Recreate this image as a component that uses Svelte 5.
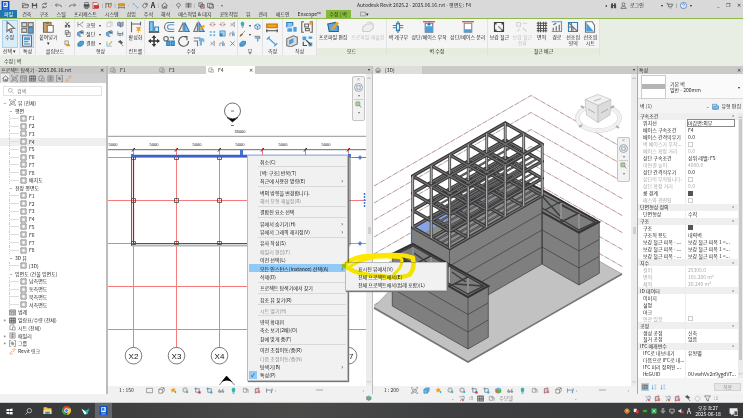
<script>
	const B = "#4a9fdc", K = "#4a4a4a", O = "#f2a21c", G = "#bdbdbd", T = "#2f7fb8", R = "#e03030";

	// every icon is a list of [path, fill, stroke] on a 16x16 grid
	const icons = {
		revit: [["M1 0h14v16H1z", "#0b4fc4"], ["M4 2h8v9H4z", "#fff"], ["M4 13h8v2H4z", "#7fb2ff"], ["M6 9V4h3v2H7l3 3", "none", "#0b4fc4"]],
		open: [["M1 13V3h5l1 2h6v3M1 13l3-6h12l-3 6z", "none", K]],
		save: [["M2 2h10l2 2v10H2z", K], ["M5 2h6v4H5zM4 9h8v5H4z", "#ddd"]],
		sync: [["M3 7a5 5 0 0 1 9-2M13 9a5 5 0 0 1-9 2M12 1v4H8M4 15v-4h4", "none", K]],
		undo: [["M5 3L1 7l4 4M1 7h10q4 0 4 5", "none", K]],
		redo: [["M11 3l4 4-4 4M15 7H5q-4 0-4 5", "none", K]],
		print: [["M4 6V1h8v5M3 6h11v6H3zM5 10h6v5H5z", "#ddd", K], ["M2 6h12v4H2z", K]],
		pdf: [["M2 1h9l3 3v11H2z", "#eee", "#a33"], ["M4 7h12v7H4z", R]],
		join: [["M2 2v12M2 4h12M14 2v8M8 4v8", "none", K], ["M9 9h5v5H9z", O]],
		ruler: [["M1 4h14v5H1z", O, "#b9740a"], ["M1 13h14M1 11v4M15 11v4", "none", K]],
		dim: [["M3 4l10 9M1 6l4-4M11 15l4-4", "none", B]],
		tag: [["M3 9l5-6h6v6l-6 5z", "none", K], ["M11 5h1v1h-1z", K, K]],
		home: [["M1 8l7-6 7 6M3 7v7h10V7M7 14v-4h3v4", "none", K]],
		section: [["M8 2l5 5-5 5-5-5zM8 12v3", "none", K]],
		thin: [["M1 3h14M1 8h14", "none", B], ["M1 5h14M1 11h14M8 2v12", "none", K]],
		closew: [["M2 2h8v8H2zM6 6h8v8H6z", "#ddd", K], ["M8 8l5 5M13 8l-5 5", "none", R]],
		windows: [["M1 3h11v9H1zM5 6h10v8H5z", "#eee", K]],
		find: [["M2 14V7l2-5h2l1 5h2l1-5h2l2 5v7h-5v-5H7v5z", K]],
		user: [["M8 2a3 3 0 0 1 3 4q0 3-3 3T5 6a3 3 0 0 1 3-4M2 15q0-5 6-5t6 5z", "none", "#456"]],
		cart: [["M1 3h3l2 8h7l2-6H5M7 14h1M12 14h1", "none", "#345"]],
		help: [["M8 1a7 7 0 1 1 0 14A7 7 0 1 1 8 1z", "#e8f0ff", "#2b66b0"], ["M6 6q0-2 2-2t2 2q0 1-2 3M8 11v1", "none", "#2b66b0"]],
		arrow: [["M4 1v13l3-3 2 5 2-1-2-5h5z", "#fff", "#777"]],
		modprops: [["M1 2h6v5H1zM9 2h6v5H9zM1 9h6v5H1z", "#d9d9d9", "#777"], ["M9 8h6v7H9z", B, "#777"]],
		props: [["M2 1h12v14H2z", "#eaf5fc", "#667"], ["M4 3h8v4H4z", B], ["M4 9h6M4 12h8", "none", T]],
		paste: [["M2 2h10v13H2z", "#c9a26b", "#8a6a3c"], ["M7 6h8v9H7z", "#fff", "#777"], ["M5 1h4v3H5z", "#777"]],
		cut: [["M3 2l8 9M12 2L4 11", "none", "#222"], ["M3 10h3v4H3zM10 10h3v4h-3z", "none", "#222"]],
		copy: [["M3 1h7v9H3zM6 5h8v10H6z", "#fff", "#555"]],
		match: [["M2 2h8v9H2z", "#eee", "#777"], ["M4 8l8 1 2 5H6z", O], ["M6 12h8", "none", B]],
		cope: [["M2 2v12M6 8l8-6M6 8l8 6M2 8h5M13 2v3", "none", "#777"]],
		cutgeo: [["M1 6l6-3 7 3v6l-7 3-6-3z", "#6aabd8", "#3b6f99"], ["M8 8h7v6H8z", "#f5f5f5"], ["M9 2h5v5H9z", "none", K]],
		joingeo: [["M2 8l5-5h8v6l-5 5H2z", B, "#2e6b99"]],
		wallj: [["M2 4h9v9H2zM5 2h9v9", "none", G]],
		split: [["M1 4l6-2v10l-6-2zM8 5l6-3v9l-6 3z", "#8ab9d8", "#667"]],
		beam: [["M2 3v10M2 8h11M13 4v9", "none", "#555"], ["M4 10h6v4H4z", B]],
		paint: [["M2 3v11h11", "none", B], ["M5 11l8-9 2 2-8 8z", O]],
		hammer: [["M3 4l5-3 5 5-3 2zM8 7l6 7", "#555", "#555"]],
		activate: [["M2 1v14M14 1v5M2 4h12", "none", "#666"], ["M8 8h7l-2 3 2 2H8l2-2zM11 13h1v3h-1z", O]],
		align: [["M2 1h5v13H2z", "#8bc3ea", T], ["M9 8h5v6H9z", "#dfeffa", T], ["M1 15h14", "none", K]],
		offset: [["M15 2H8a6 6 0 0 0 0 12h7", "none", "#777"], ["M15 5H9a3 3 0 0 0 0 6h6", "none", B]],
		mirror: [["M7 2v12H1z", "#e5e5e5", "#777"], ["M9 2v12h6z", "#84bde6", T]],
		mirrorp: [["M6 2v12H1z", "#e5e5e5", "#777"], ["M8 2v12h7z", "#84bde6", T], ["M9 10l5-5 2 2-5 5z", O]],
		move: [["M8 0l3 4H9v3h3V5l4 3-4 3V9H9v3h2l-3 4-3-4h2V9H4v2L0 8l4-3v2h3V4H5z", "#333"]],
		copym: [["M4 2a3 3 0 1 1 0 6 3 3 0 1 1 0-6z", "none", "#666"], ["M5 8h4v6H5zM11 8h4v6h-4z", B, T], ["M9 3h5v3", "none", "#666"]],
		rotate: [["M11 3a6.500 6.500 0 1 0 3 5M7 2h5v5", "none", "#555"]],
		trim: [["M1 4h8v4M1 8h5v7", "none", "#777"], ["M7 3l8 2v5l-3-2v6H9V8z", "#6fb4e4"]],
		splitm: [["M1 8h5M10 8h5", "none", "#777"], ["M4 4h8v7H4z", "none", "#e09090"]],
		array: [["M1 2h6v5H1zM9 2h6v5H9zM1 9h6v5H1zM9 9h6v5H9z", B, "#fff"]],
		scale: [["M2 2h12v12H2z", "#a4d0ee", T], ["M2 8h6v6H2z", T]],
		pin: [["M3 12l9-9M4 5l7 7M12 2v12", "none", "#777"]],
		trim1: [["M2 14V7h10v7M9 2v12", "none", "#777"], ["M7 9h3v4H7z", B]],
		del: [["M3 3l10 10M13 3L3 13", "none", "#e02020"]],
		bulb: [["M8 1a5 5 0 0 1 3 8v3H5V9a5 5 0 0 1 3-8z", "#35b3b3"], ["M6 14h4", "none", K]],
		brush: [["M14 2L7 9", "none", "#666"], ["M7 8l2 2-5 5H1l2-4z", "#8d5a2b"]],
		box: [["M2 5l6-3 6 3v7l-6 3-6-3z", "#dceefa", T], ["M2 5l6 3 6-3M8 8v7", "none", "#667"]],
		hide: [["M1 3h12v6", "none", K], ["M2 5h12v3h-4v7H7V8H2z", B]],
		part: [["M1 2h8v7H1z", "#8bc3ea", T], ["M1 9h8v6H1zM9 7h6v8H9z", B, "#fff"]],
		group: [["M4 1H1v14h3M12 1h3v14h-3", "none", "#666"], ["M5 4h5v4H5zM6 10h5v3H6z", "none", "#666"], ["M11 1h4v4h-4z", O]],
		assembly: [["M1 5l9-4 5 2v9l-9 4-5-2z", "#dcdcdc", "#777"], ["M4 7l6-3v6l-6 3z", B]],
		similar: [["M2 2h5v5H2zM10 2h5v3h-5zM10 10h5v5h-5z", B], ["M7 7l6 6M3 9v5h5", "none", K]],
		profile: [["M1 4l10-2v3l4 2v7H3z", "#5aa9e0", "#2c5f85"], ["M6 9l7-8 3 2-7 8-3 1z", O]],
		reset: [["M1 8l5-4h9v6l-5 4H1zM7 2q5-2 7 2", "#eee", "#cfcfcf"]],
		opening: [["M1 6h14M1 9h14", "none", "#777"], ["M6 3h4v10H6z", "#e8f4fc", T], ["M8 0v5M8 11v5", "none", T]],
		attach: [["M0 1h16", "none", "#d33"], ["M3 3h10v12H3z", "#fff", "#777"], ["M3 7h10v8H3z", B], ["M8 7V3l-2 2M8 3l2 2", "none", T]],
		detach: [["M0 1h16", "none", "#d33"], ["M3 3h10v12H3z", "#fff", "#888"], ["M3 11h10v4H3z", B]],
		rebar: [["M2 2h12v12H2z", "none", "#444"], ["M3 3h1v1H3zM12 3h1v1h-1zM3 12h1v1H3zM12 12h1v1h-1z", K, K], ["M7 7l5 5", "none", "#888"]],
		propag: [["M1 2h5v5H1zM9 3h6M9 9l5 5M5 10l-3 4", "none", "#d3d3d3"]],
		mesh: [["M3 1v14M6 1v14M10 1v14M13 1v14M1 3h14M1 6h14M1 10h14M1 13h14", "none", "#555"]],
		route: [["M1 1h13v13H1", "none", B], ["M3 9v4M7 7v6M11 5v8M3 5l4-2", "none", "#666"]],
		fabric: [["M2 2h12v12H2z", "#f8f8f8", T], ["M2 2l12 12M2 8h6v6M6 2v12", "none", "#777"]],
		fabric2: [["M2 1h9l3 5v9H2z", "#fff", "#777"], ["M3 2l10 12H3z", B]],
		search: [["M6 1a5 5 0 1 1 0 10A5 5 0 1 1 6 1zM10 10l5 5", "none", "#888"]],
		view: [["M1 1h3M12 1h3M1 15h3M12 15h3M1 1v3M15 1v3M1 12v3M15 12v3M4 5h8v7H4zM4 12l8-7", "none", "#777"]],
		plan: [["M2 2h12v12H2z", "#fff", "#777"], ["M0 4h2M0 12h2M14 4h2M14 12h2M4 0v2M12 0v2M4 14v2M12 14v2M4 4h8v8H4z", "none", "#999"]],
		legend: [["M1 2h14v12H1z", "#ccc", "#777"], ["M1 5h14M4 8h3M4 11h3M9 8h4M9 11h4", "none", "#777"]],
		sched: [["M1 2h14v12H1z", "#ddd", "#555"], ["M1 4h14M1 8h14M1 11h14M6 2v12M11 2v12", "none", "#555"]],
		sheet: [["M2 13V4l4-2h5v4M2 13h6M8 7h6v7H8z", "none", "#777"]],
		family: [["M2 2h12v12H2zM5 5h6v6H5zM8 2v12", "none", "#777"]],
		grp: [["M5 1H1v14h4M11 1h4v14h-4M5 5h4v4H5zM7 7h4v4H7z", "none", "#777"]],
		link: [["M7 5l3-3q3-1 4 2l-5 5M9 11l-3 3q-3 1-4-2l5-5", "none", "#e8864a"]],
		detail: [["M1 3h14v10H1z", "none", "#777"]],
		style: [["M2 6l4-4h8v7l-4 5H2z", "#fff", "#666"], ["M2 6h8v8M10 6l4-4", "none", "#666"]],
		styleb: [["M2 6l4-4h8v7l-4 5H2z", "#74bdf0", "#3483c0"], ["M2 6h8v8M10 6l4-4", "none", "#3483c0"]],
		sun: [["M7 1l2 3 4 0-2 3 2 4-5-1-4 3V9L1 6l4-1z", O], ["M11 9h3v5h-3z", "#3ab0c0"]],
		shadow: [["M7 2a5 5 0 1 1 0 10A5 5 0 1 1 7 2z", "#e5e5e5", "#777"], ["M10 9h4v5h-4z", "#3ab0c0"]],
		crop: [["M4 1v11h11M1 4h11v10", "none", "#456a90"], ["M10 10h5v5h-5z", R]],
		crop2: [["M4 1v11h11M1 4h11v10", "none", "#456a90"], ["M10 10h4v5h-4z", "#3ab0c0"]],
		glasses: [["M1 10l3-5M8 10l4-6M2 9h4v3H2zM9 9h4v3H9z", "none", "#666"]],
		reveal: [["M3 3h8v9H3zM7 6h7v7", "none", "#888"]],
		temp: [["M3 4l8-2v9l-8 3z", "#dcb", "#846"], ["M9 8h5v6H9z", "#d77"]],
		constr: [["M1 3v10M14 3v6M1 7h13", "none", "#667"], ["M11 9h3v5h-3z", "#3ab0c0"]],
		level: [["M3 2l6 6-4 6M8 3h6v6", "none", "#6a8098"], ["M9 9h5v5H9z", "#e47a6a"]],
		filter: [["M1 2h14L10 8v6l-4-2V8z", "none", "#567"]],
		gear: [["M8 2l4 2 2 4-2 4-4 2-4-2-2-4 2-4z", "none", "#bbb"]],
		wheel: [["M8 1a7 7 0 1 1 0 14A7 7 0 1 1 8 1zM5 5h6v6H5z", "#f6f6f6", "#8a97a8"]],
		zoomr: [["M2 2h9v9H2z", "#a9cf9c", "#7a9a70"], ["M9 9l6 6", "none", "#777"]],
		world: [["M1 4l6-3 7 3v8l-7 3-6-3z", "#5bb7d8"], ["M7 8l7-3v7l-7 3z", "#6cb04a"], ["M1 4l6 3v8l-6-3z", "#d8705a"]],
		win: [["M1 3l6-1v5H1zM8 2l7-1v6H8zM1 9h6v5l-6-1zM8 9h7v6l-7-1z", "#fff"]],
		searchw: [["M10 1a5 5 0 1 1 0 10A5 5 0 1 1 10 1zM6 10l-5 5", "none", "#eee"]],
		explorer: [["M1 2h6l1 2h7v10H1z", "#f6c544"], ["M1 7h14v7H1z", "#fbdc82"], ["M4 10h8v4H4z", "#3a8fd8"]],
		chrome: [["M8 0a8 8 0 0 1 7 4H8L4 7 1 4a8 8 0 0 1 7-4z", "#e8453c"], ["M15 4a8 8 0 0 1-7 12l3-6V4z", "#fcc419"], ["M1 4l5 8 2 4A8 8 0 0 1 1 4z", "#34a853"], ["M8 4.500a3.500 3.500 0 1 1 0 7 3.500 3.500 0 1 1 0-7z", "#4285f4", "#fff"]],
		bird: [["M1 3l6 4 8-5-3 10-5 2z", "#21b8a6"], ["M1 3l6 4 3 5-4 1z", "#fff"]],
		hex: [["M8 1l6 4v6l-6 4-6-4V5z", "#c9731a", "#f3a13a"], ["M5 6h6M8 6v5", "none", "#fff"]],
		shield: [["M2 2h8v9H2z", "#eee"], ["M8 6h7v8H8z", "#e03a3a"]],
		chip: [["M2 4h12v8H2z", "#4ba23c", "#1c4a14"]],
		green: [["M1 1h14v14H1z", "#2cb04c"], ["M4 4l8 8M12 4l-8 8", "none", "#fff"]],
		mic: [["M6 1h4v8H6zM3 7q0 5 5 5t5-5M8 12v3", "none", "#ddd"]],
		net: [["M2 3h12v8H2zM5 14h6", "none", "#eee"]],
		vol: [["M1 6h3l5-4v12l-5-4H1z", "#eee"], ["M9 8h6v6H9z", "#e03a3a"]],
		note: [["M1 2h14v10H8l-4 3v-3H1z", "#eee"], ["M9 7h7v8H9z", "#555", "#ddd"]],
		edit: [["M1 3h10v11H1z", "#e4f0fa", T], ["M4 7h11v7H4z", "#8fc3e8", T]],
		sort: [["M4 2v12M2 11l2 3 2-3M9 3h5M9 8h4M9 13h5", "none", B]],
	};

	const tabs = ["건축", "구조", "스틸", "프리캐스트", "시스템", "삽입", "주석", "해석", "매스작업 & 대지", "공동작업", "뷰", "관리", "애드인", "Enscape™"];

	// [depth, toggle, icon, label]
	const floors = ["F1", "F2", "F3", "F4", "F5", "F6", "F7", "F8"];
	const leaf = (label) => [2, "", "plan", label];
	const tree = [
		[0, "−", "view", "뷰 (전체)"],
		[1, "−", "", "평면"],
		...floors.map(leaf),
		leaf("배치도"),
		[1, "−", "", "천장 평면도"],
		...floors.map(leaf),
		[1, "−", "", "3D 뷰"],
		leaf("{3D}"),
		[1, "−", "", "입면도 (건물 입면도)"],
		...["남측면도", "동측면도", "북측면도", "서측면도"].map(leaf),
		[0, "", "legend", "범례"],
		[0, "+", "sched", "일람표/수량 (전체)"],
		[0, "", "sheet", "시트 (전체)"],
		[0, "+", "family", "패밀리"],
		[0, "+", "grp", "그룹"],
		[0, "", "link", "Revit 링크"],
	];

	// [name, value, disabled], a lone name is a group heading
	const props = [
		["구속조건"],
		["위치선", "마감면:외부"], ["베이스 구속조건", "F4"], ["베이스 간격띄우기", "0.0"],
		["벽 베이스가 부착...", false, true], ["베이스 확장 거리", "0.0", true],
		["상단 구속조건", "상위 레벨: F5"], ["미연결 높이", "4000.0", true],
		["상단 간격띄우기", "0.0"], ["상단이 부착됩니다.", false, true],
		["상단 확장 거리", "0.0", true], ["룸 경계", true], ["매스와 관련됨", false, true],
		["단면형상 정의"],
		["단면형상", "수직"],
		["구조"],
		["구조", true], ["구조적 용도", "내력벽"],
		["보강 철근 피복 - ...", "보강 철근 피복 1 <..."],
		["보강 철근 피복 - ...", "보강 철근 피복 1 <..."],
		["보강 철근 피복 - ...", "보강 철근 피복 1 <..."],
		["치수"],
		["길이", "25300.0", true], ["면적", "101.200 m²", true], ["체적", "20.240 m³", true],
		["ID 데이터"],
		["이미지", ""], ["설명", ""], ["마크", ""], ["연관 있음", false, true],
		["공정"],
		["생성 공정", "신축"], ["철거 공정", "없음"],
		["IFC 매개변수"],
		["IFC로 내보내기", "유형별"], ["다음으로 IFC로 내...", ""],
		["IFC 미리 정의된 ...", ""], ["IfcGUID", "0UvwhVv2n9ygdVT..."],
	];

	// null is a separator
	const menu = [
		{ text: "취소(C)" }, null,
		{ text: "[벽: 구조] 반복(T)" }, { text: "최근에 사용한 명령(E)", more: true }, null,
		{ text: "벽의 방향을 변경합니다." }, { text: "해석 모형 재설정(R)", off: true }, null,
		{ text: "결합된 요소 선택" }, null,
		{ text: "뷰에서 숨기기(H)", more: true }, { text: "뷰에서 그래픽 재지정(V)", more: true }, null,
		{ text: "유사 작성(S)" }, { text: "패밀리 편집(F)", off: true }, { text: "이전 선택(L)" },
		{ text: "모든 인스턴스(Instance) 선택(A)", more: true, open: true }, { text: "삭제(D)" }, null,
		{ text: "프로젝트 탐색기에서 찾기" }, null,
		{ text: "참조 뷰 찾기(R)" }, null,
		{ text: "시트 열기(H)", off: true }, null,
		{ text: "영역 확대(I)" }, { text: "축소 보기(2배)(O)" }, { text: "창에 맞게 줌(F)" }, null,
		{ text: "이전 초점이동/줌(R)" }, { text: "다음 초점이동/줌(N)", off: true },
		{ text: "탐색기(B)", more: true }, { text: "특성(P)", checked: true },
	];
	const submenu = ["표시된 뷰에서(V)", "전체 프로젝트에서(E)", "전체 프로젝트에서(범례 포함)(L)"];

	const planBar = ["detail", "style", "sun", "shadow", "crop", "crop2", "glasses", "bulb", "reveal", "temp", "constr"];
	const modelBar = ["view", "styleb", "sun", "shadow", "shadow", "crop", "crop2", "world", "glasses", "bulb", "reveal", "temp", "style", "constr"];

	const gx = [133, 176, 219, 262, 305, 348];
	const gy = [157, 200, 243, 286, 329];

	// isometric frame: i runs along the long side, j along the short one, k is the storey from the top
	const pt = (i, j, k) => [412.7 + (i + j) * 18.5, 176 + (j - i) * 10.6 + k * 17.1];
	const seg = (a, b) => `M${a[0]} ${a[1]}L${b[0]} ${b[1]}`;
	const storeys = [3, 2, 1, 0].map((k) => {
		let beams = "", joists = "", cols = "";
		for (let j = 0; j <= 2; j++) beams += seg(pt(0, j, k), pt(5, j, k));
		for (let i = 0; i <= 5; i++) beams += seg(pt(i, 0, k), pt(i, 2, k));
		if (k > 0) for (const j of [0.5, 1.25, 1.5, 1.75]) joists += seg(pt(j < 1 ? 2 : 0, j, k), pt(5, j, k));
		if (k < 3)
			for (let j = 0; j <= 2; j++)
				for (let i = 0; i <= 5; i++)
					if (j == 2 || i == 0 || j == 0 || i == 5) cols += seg(pt(i, j, k), pt(i, j, k + 1));
		return { k, beams, joists, cols };
	});

	let keyword = $state("");
	let selected = $state(5);
</script>

{#snippet icon(name, size = 7)}
	<svg class="ico" width={size} height={size} viewBox="0 0 16 16" stroke-width="1.5" aria-hidden="true">
		{#each icons[name] as [d, fill, stroke]}
			<path {d} {fill} stroke={stroke ?? "none"} />
		{/each}
	</svg>
{/snippet}

{#snippet big(name, label, off = false)}
	<button class="big" disabled={off}>
		{@render icon(name, 12)}
		<span>{label}</span>
	</button>
{/snippet}

{#snippet small(name, label = "")}
	<button class="small" aria-label={label || name}>{@render icon(name, 7)}{label}</button>
{/snippet}

{#snippet navbar()}
	<div class="navbar">
		<i>×</i>
		<button aria-label="휠">{@render icon("wheel", 9)}</button>
		<i>▾</i>
		<hr />
		<button aria-label="줌">{@render icon("zoomr", 7)}</button>
		<i>▾</i>
	</div>
{/snippet}

{#snippet viewbar(scale, list)}
	<div class="viewbar">
		<span class="scale">{scale}</span>
		{#each list as name}
			<button aria-label={name}>{@render icon(name, 7)}</button>
		{/each}
		<div class="hscroll"><span>‹</span><b></b><span>›</span></div>
	</div>
{/snippet}

<div class="app">
	<header class="quick">
		<button aria-label="Revit">{@render icon("revit", 9)}</button>
		<div class="tools">
			{#each ["open", "save", "sync", "·", "undo", "·", "redo", "·", "print", "pdf", "|", "join", "|", "ruler", "·", "dim", "tag", "A", "|", "home", "·", "section", "thin", "|", "closew", "windows", "·", "▾"] as q}
				{#if icons[q]}
					<button aria-label={q}>{@render icon(q, 7)}</button>
				{:else if q == "A"}
					<button class="letter">A</button>
				{:else}
					<i>{q}</i>
				{/if}
			{/each}
		</div>
		<h1>Autodesk Revit 2025.2 - 2025.06.16.rvt - 평면도: F4</h1>
		<div class="account">
			<i>◂</i>
			{@render icon("find")}
			{@render icon("user")}
			<button>로그인</button>
			<i class="push">▾</i>
			{@render icon("cart")}
			<i>|</i>
			{@render icon("help")}
			<i>▾</i>
		</div>
		<div class="win">
			<button aria-label="최소화">_</button>
			<button aria-label="복원">❐</button>
			<button aria-label="닫기">✕</button>
		</div>
	</header>

	<nav class="tabs">
		<button class="file">파일</button>
		{#each tabs as t}
			<button>{t}</button>
		{/each}
		<button class="context">수정 | 벽</button>
		<button class="mini">{@render icon("detail", 6)} ▾</button>
	</nav>

	<div class="ribbon">
		<section class="panel w20">
			<div class="body"><button class="big on tall">{@render icon("arrow", 12)}<span>수정</span></button></div>
			<h2>선택 ▾</h2>
		</section>
		<section class="panel w16">
			<div class="body stack">
				<button aria-label="유형 특성">{@render icon("modprops", 13)}</button>
				<button class="on" aria-label="특성">{@render icon("props", 12)}</button>
			</div>
			<h2>특성</h2>
		</section>
		<section class="panel w39">
			<div class="body">
				<button class="big">{@render icon("paste", 12)}<span>붙여넣기</span><span>▾</span></button>
				<div class="col">{@render small("cut")}{@render small("copy")}{@render small("match")}</div>
			</div>
			<h2>클립보드</h2>
		</section>
		<section class="panel w52">
			<div class="body">
				<div class="col">{@render small("cope", "코핑")}{@render small("cutgeo", "절단")}{@render small("joingeo", "결합")}</div>
				<div class="col dots"><i>▾</i><i>▾</i><i>▾</i></div>
				<div class="col">{@render small("wallj")}{@render small("cutgeo")}{@render small("paint")}</div>
				<div class="col">{@render small("split")}{@render small("beam")}{@render small("hammer")}</div>
			</div>
			<h2>형상</h2>
		</section>
		<section class="panel w18">
			<div class="body">{@render big("activate", "활성화")}</div>
			<h2>컨트롤</h2>
		</section>
		<section class="panel w93">
			<div class="body">
				<div class="quad">
					{#each ["align", "offset", "mirror", "mirrorp", "move", "copym", "rotate", "trim"] as n}
						<button aria-label={n}>{@render icon(n, 12)}</button>
					{/each}
				</div>
				<div class="col">{@render small("splitm")}{@render small("array")}{@render small("pin")}</div>
				<div class="col">{@render small("splitm")}{@render small("scale")}{@render small("trim1")}</div>
				<div class="col">{@render small("pin")}{@render small("trim1")}{@render small("del")}</div>
			</div>
			<h2>수정</h2>
		</section>
		<section class="panel w25">
			<div class="body">
				<div class="col">{@render small("bulb")}{@render small("brush")}{@render small("joingeo")}</div>
				<div class="col dots"><i>▾</i><i>▾</i><i></i></div>
				<div class="col">{@render small("box")}{@render small("hide")}<i></i></div>
			</div>
			<h2>뷰</h2>
		</section>
		<section class="panel w20">
			<div class="body stack">
				<button aria-label="측정">{@render icon("ruler", 12)}</button>
				<button aria-label="치수">{@render icon("dim", 12)}</button>
			</div>
			<h2>측정</h2>
		</section>
		<section class="panel w34">
			<div class="body">
				<div class="quad two">
					{#each ["part", "group", "assembly", "similar"] as n}
						<button aria-label={n}>{@render icon(n, 12)}</button>
					{/each}
				</div>
			</div>
			<h2>작성</h2>
		</section>
		<section class="panel ctx w70">
			<div class="body">{@render big("profile", "프로파일 편집")}{@render big("reset", "프로파일 재설정", true)}</div>
			<h2>모드</h2>
		</section>
		<section class="panel ctx w101">
			<div class="body">{@render big("opening", "벽 개구부")}{@render big("attach", "상단/베이스 부착")}{@render big("detach", "상단/베이스 분리")}</div>
			<h2>벽 수정</h2>
		</section>
		<section class="panel ctx w110">
			<div class="body">
				{@render big("rebar", "보강 철근")}
				{@render big("propag", "보강 철근\n전파", true)}
				{@render big("mesh", "면적")}
				{@render big("route", "경로")}
				{@render big("fabric", "선조립\n영역")}
				{@render big("fabric2", "선조립\n시트")}
			</div>
			<h2>철근 배근</h2>
		</section>
	</div>
	<div class="options">수정 | 벽</div>

	<main class="work">
		<aside class="browser">
			<div class="caption">프로젝트 탐색기 - 2025.06.16.rvt <button aria-label="닫기">✕</button></div>
			<div class="tooling">
				{#each ["home", "view", "legend", "sched", "sheet", "family", "grp", "link"] as n, i}
					<button class:active={i == 0} aria-label={n}>{@render icon(n, 7)}</button>
				{/each}
			</div>
			<label class="search">{@render icon("search", 6)}<input type="text" placeholder="검색" aria-label="검색" bind:value={keyword} /></label>
			<ul class="tree">
				{#each tree as [depth, toggle, ic, label], i}
					<li class="d{depth}" class:sel={i == selected}>
						{#if depth == 2}
							<span class="dash"></span>
						{:else}
							<span class="toggle">{toggle}</span>
						{/if}
						<button onclick={() => (selected = i)}>
							{#if ic}{@render icon(ic, 7)}{/if}{label}
						</button>
					</li>
				{/each}
			</ul>
		</aside>

		<section class="doc">
			<div class="doctabs">
				<button>{@render icon("sheet", 6)}F1</button>
				<button>{@render icon("sheet", 6)}F3</button>
				<button class="active">{@render icon("sheet", 6)}F4<b>✕</b></button>
				<i>▾</i>
			</div>
			<div class="canvas">
				<svg class="drawing" viewBox="108 74 258 312" preserveAspectRatio="xMidYMid slice">
					<g fill="none" stroke="#333" stroke-width=".7">
						<circle cx="232.500" cy="111" r="8" />
						<path d="M231 111h3M231 125.500h3" />
						<path d="M227 117.500q6 3 11 0l-5.500 4.500z" fill="#000" />
					</g>
					<path d="M107 136.300h260" stroke="#aaa" stroke-width="1.200" />
					<path d="M107 149.700h260" stroke="#444" stroke-width=".8" />
					<g class="num">
						<text x="240" y="133">35000</text>
						{#each [113, 154, 197, 240, 283, 326] as x}
							<text {x} y="146">5000</text>
						{/each}
					</g>
					{#each gx as x}
						<path d="M{x + 0.5} 148v200" stroke="#f47c7c" />
						<path d="M{x - 1} 151.500l3-3.500" stroke="#222" />
					{/each}
					{#each gy as y}
						<path d="M107 {y + 0.5}h260" stroke="#f47c7c" />
					{/each}
					<path d="M131.500 156v90M350 156v89" stroke="#666" fill="none" />
					<path d="M133.500 157v88M348 157v88" stroke="#9a2222" stroke-width="1.200" />
					<path d="M132 245.500h218" stroke="#b5b5b5" stroke-width="2" />
					<path d="M133 243.500h216" stroke="#b02a2a" />
					{#each gx.slice(0, 3) as x}
						<path d="M{x - 1.500} 155.500h4v4h-4zM{x - 1.500} 198.500h4v4h-4zM{x - 1.500} 241.500h4v3h-4z" fill="none" stroke="#444" stroke-width=".8" />
					{/each}
					<path d="M132 155.800h218" stroke="#3f5fc4" stroke-width="2.200" />
					<path d="M131 154h3v3h-3zM348 154h3v3h-3zM240 150h3v5h-3z" fill="#4473d6" />
					<path d="M352 157.500h15" stroke="#8d6bc8" />
					<path d="M364.500 193v15" stroke="#4473d6" stroke-width="1.500" stroke-dasharray="2 1" />
					<path d="M358 157.500h4M360 155.500v4M358 243.500h4M360 241.500v4" stroke="#4473d6" stroke-width="1.500" />
					<g class="bubble">
						{#each [[133.5, "X2"], [176.5, "X3"], [219.5, "X4"], [348.5, "X7"]] as [x, name]}
							<circle cx={x} cy="355.700" r="8.300" />
							<text {x} y="358.500">{name}</text>
						{/each}
					</g>
					<path d="M226.500 376l-7 9M226.500 376l8 9" stroke="#333" stroke-width=".7" />
					<path d="M226.500 376l-5 6q5-3 11 0z" />
				</svg>
				<div class="vscroll"><span>︿</span><b></b><span>﹀</span></div>
				{@render navbar()}

				<svg class="marker under" viewBox="340 248 80 34"><use href="#scribble" /></svg>
				<div class="menu" role="menu">
					{#each menu as item}
						{#if item}
							<button role="menuitem" class:open={item.open} class:off={item.off}>
								<span class="check" class:checked={item.checked}>{item.checked ? "✓" : ""}</span>
								{item.text}
								{#if item.more}<em>›</em>{/if}
							</button>
						{:else}
							<hr />
						{/if}
					{/each}
				</div>
				<div class="menu sub" role="menu">
					{#each submenu as text}
						<button role="menuitem"><span class="check"></span>{text}</button>
					{/each}
				</div>
				<svg class="marker" viewBox="340 248 80 34">
					<g id="scribble" fill="none" stroke="#fff200" stroke-width="4.500" stroke-linecap="round">
						<path d="M344 266Q352 256 372 256Q404 253 413 258Q415 270 409 275Q400 279 380 276Q358 275 348 268" />
						<path d="M348 268Q358 260 376 257Q402 256 402 260Q402 268 394 274" stroke-width="3" />
					</g>
				</svg>
			</div>
			{@render viewbar("1 : 150", planBar)}
		</section>

		<section class="doc">
			<div class="doctabs">
				<button class="lit">{@render icon("home", 6)}{"{3D}"}</button>
				<i>▾</i>
			</div>
			<div class="canvas">
				<svg class="drawing" viewBox="373 74 258 312" preserveAspectRatio="xMidYMid slice">
					<!-- level lines round the model -->
					{#each [0, 1, 2, 3, 4, 5, 6, 7] as n}
						<path d="M374 {186 + n * 17}L531 {95.5 + n * 17}L623 {148 + n * 17}" fill="none" stroke="#a37a7a" stroke-width=".8" stroke-dasharray="5 .7 1 .7" />
					{/each}
					<path d="M374 307L468 362L622 274L599 261L542 225L400 280z" fill="#c2c2c2" stroke="#8a8a8a" stroke-width=".6" />
					<path d="M374 308L468 362L622 274" fill="none" stroke="#777" stroke-width="1.600" />

					<g class="solid">
						<!-- right wing -->
						<path d="M542 191L599.300 222V273.300L579 285L542 264z" />
						<path class="roof" d="M524 181L542 190L599 222L579 232.500L542 212z" />
						<path class="frame" d="M542 194L595 222.500L579 230L542 208M560 202L545 210M579 213L561 222M579 213V230M561 202V221M542 196L560 216M561 205L595 222" />
						<path d="M579 233V285M542 230L579 251L599 239.500M542 247L579 268L599 256.500M542 212L579 233L599 222" fill="none" />
						<!-- main block -->
						<path d="M411.500 227.500L449.500 248L542 195V264L488 295V286L449.500 264L411.500 244z" />
						<path d="M449.500 266L542 213M449.500 283L542 230M476 285L542 247M449.500 248V266M542 195V264" fill="none" />
						<!-- front wing -->
						<path d="M392.300 254L412.700 244L488.300 286V337.300L468 349L392.300 306z" />
						<path class="roof" d="M392.300 254L412.700 244L488.300 286L468 297z" />
						<path class="frame" d="M396 254L413 246L484 286L468 294zM413 247V265M431 257V275M449.500 267V286M468 278V295M413 265L431 256M431 275L450 266M450 286L468 277M414 253L428 263M452 272L466 282M455 284L483 286" />
						<path class="post" d="M413 247V262M431 257V272M449.500 267V283M468 278V293M561 203V219M579 214V229" />
						<path d="M468 297V349M392.300 271L468 314.500L488 303M392.300 288.500L468 332L488 320M392.300 254L468 297L488.300 286" fill="none" />
					</g>

					{#each storeys as s}
						{#if s.k == 3}
							<path d="M412.700 227.300L449.700 248.500L542.200 195.500L505.200 174.300z" fill="#8e8e8e" />
							<path d="M411.700 227L505 173.500L516 180L424 233z" fill="#86a3e6" />
							<path d="M411.500 244V227L505 173.500" fill="none" stroke="#3462d0" stroke-width="1.200" />
						{/if}
						<path d={s.joists} stroke="#484848" stroke-width="2.200" />
						<path d={s.joists} stroke="#858585" stroke-width=".6" />
						<path d={s.beams} stroke="#343434" stroke-width="3.400" stroke-linecap="round" />
						<path d={s.beams} stroke="#6f6f6f" stroke-width="1.400" />
						<path d={s.cols} stroke="#3a3a3a" stroke-width="2.800" />
						<path d={s.cols} stroke="#b8b8b8" stroke-width="1.200" />
					{/each}

					<!-- view cube -->
					<ellipse cx="598.500" cy="118" rx="21" ry="12.500" fill="none" stroke="#d4d4d4" stroke-width="4.500" />
					<ellipse cx="598.500" cy="118" rx="21" ry="12.500" fill="none" stroke="#f1f1f1" stroke-width="3.500" />
					<path d="M579 127l3-2M616 126l3 2M581 106l3 2M611 108l3-2" stroke="#aaa" stroke-width="2" />
					<g stroke="#b5b5b5" stroke-width=".6">
						<path d="M585 99.500L598 94.500L611 99.500L598 105.500z" fill="#f1f1f1" />
						<path d="M585 99.500L598 105.500V122.500L586.500 115z" fill="#e6e6e6" />
						<path d="M611 99.500L598 105.500V122.500L610 115z" fill="#dcdcdc" />
						<path d="M594 101l7-2.500M588 109l7 4M601 113l7-4" stroke="#888" />
					</g>
				</svg>
				<div class="vscroll"><span>︿</span><b></b><span>﹀</span></div>
				<div class="lower">{@render navbar()}</div>
			</div>
			{@render viewbar("1 : 200", modelBar)}
		</section>

		<aside class="props">
			<div class="caption">특성 <button aria-label="닫기">✕</button></div>
			<button class="type">
				<span class="preview"></span>
				<span class="name">기본 벽<br />일반 - 200mm</span>
				<i>▾</i>
			</button>
			<div class="filter">
				<select aria-label="선택"><option>벽 (1)</option></select>
				<i>⌄</i>
				<button>{@render icon("edit", 7)}유형 편집</button>
			</div>
			<div class="gridwrap">
				<table>
					<tbody>
						{#each props as [name, value, off], i}
							{#if value === undefined}
								<tr class="head"><th colspan="2">{name}<i>«</i></th></tr>
							{:else}
								<tr class:off>
									<td>{name}</td>
									<td>
										{#if typeof value == "boolean"}
											<input type="checkbox" checked={value} disabled={off} aria-label={name} />
										{:else if i == 1}
											<input type="text" {value} aria-label={name} />
										{:else}
											{value}
										{/if}
									</td>
								</tr>
							{/if}
						{/each}
					</tbody>
				</table>
				<div class="vscroll long"><span>︿</span><b></b><span>﹀</span></div>
			</div>
			<div class="apply">
				<button class="on" aria-label="그룹">{@render icon("sched", 6)}</button>
				<button aria-label="정렬">{@render icon("sort", 6)}</button>
				<button aria-label="역정렬">{@render icon("sort", 6)}</button>
				<button class="go" disabled>적용</button>
			</div>
		</aside>
	</main>

	<footer class="status">
		<div class="left">{@render icon("world", 6)}</div>
		<div class="mid">
			<i>⌄</i>{@render icon("level", 7)}<span>:0</span>{@render icon("sched", 7)}{@render icon("reveal", 7)}<span>주모델</span><i class="end">⌄</i>
		</div>
		<div class="right">
			{#each ["level", "temp", "level", "temp", "hammer", "gear", "filter"] as n}
				{@render icon(n, 7)}
			{/each}
			<span>:1</span>
		</div>
	</footer>

	<div class="taskbar">
		{#each ["win", "searchw", "explorer", "chrome", "bird", "revit"] as n, i}
			<button class:running={i == 2 || i == 3} class:current={i == 5} aria-label={n}>{@render icon(n, i < 2 ? 7 : 9)}</button>
		{/each}
		<div class="tray">
			{#each ["hex", "shield", "chip", "green", "mic", "net", "vol"] as n}
				{@render icon(n, 6)}
			{/each}
			<b>A</b>
		</div>
		<time>오후 8:27<br />2025-06-18</time>
		<button class="notes" aria-label="알림">{@render icon("note", 9)}</button>
	</div>
</div>

<style>
:global(body) {
	margin: 0;
}

.app {
	display: flex;
	flex-direction: column;
	min-height: 100vh;
	background: #f0f0f0;
	color: #2c2c2c;
	font-family: "Noto Sans CJK KR", "Noto Sans", sans-serif;
	font-size: 5px;
	line-height: 6px;
	overflow: hidden;
}

* {
	box-sizing: border-box;
}

button, input, select {
	font: inherit;
	color: inherit;
	border: 0;
	margin: 0;
	padding: 0;
	background: none;
	border-radius: 0;
}

button {
	display: flex;
	align-items: center;
	justify-content: center;
	white-space: nowrap;
}

i, em {
	font-style: normal;
	font-size: 4px;
}

h1, h2 {
	margin: 0;
	font-size: 5px;
	font-weight: normal;
}

.ico {
	display: block;
	flex: none;
}

/* title bar */
.quick {
	display: flex;
	align-items: center;
	height: 10px;
	background: #d9d9d9;
}
.quick > button {
	width: 10px;
}
.tools {
	display: flex;
	align-items: center;
	width: 201px;
	margin-left: 12px;
	justify-content: space-between;
	flex: none;
}
.tools i {
	color: #666;
}
.letter {
	font-weight: bold;
	font-size: 7px;
}
.quick h1 {
	flex: 1;
	text-align: center;
	white-space: nowrap;
}
.account {
	display: flex;
	align-items: center;
	gap: 3px;
	width: 90px;
}
.account .push {
	margin-left: 14px;
}
.win {
	display: flex;
	justify-content: space-between;
	width: 24px;
	margin: 0 2px 0 22px;
}

/* ribbon tabs */
.tabs {
	display: flex;
	height: 9px;
	background: #d9d9d9;
	border-bottom: 1px solid #8fb94b;
}
.tabs button {
	padding: 0 4px;
}
.tabs .file {
	background: #1f77ad;
	color: #fff;
	margin-right: 1px;
}
.tabs .context {
	background: #86b83c;
	color: #1f3a08;
	margin: 0 5px 0 1px;
}

.ribbon {
	display: flex;
	height: 36px;
	background: #e8eee3;
}
.panel {
	display: flex;
	flex-direction: column;
	flex: none;
	background: #f5f5f5;
	border-right: 1px solid #e2e2e2;
}
.panel h2 {
	height: 7px;
	text-align: center;
}
.panel.ctx h2 {
	background: #e6eddf;
}
.w16 { width: 16px; }
.w18 { width: 18px; }
.w20 { width: 20px; }
.w25 { width: 25px; }
.w34 { width: 34px; }
.w39 { width: 39px; }
.w52 { width: 52px; }
.w70 { width: 70px; }
.w93 { width: 93px; }
.w101 { width: 101px; }
.w110 { width: 112px; }
.body {
	display: flex;
	justify-content: space-around;
	height: 29px;
	padding-top: 1px;
}
.big {
	flex-direction: column;
	justify-content: flex-start;
	padding-top: 1px;
	white-space: pre-line;
}
.big span {
	white-space: pre;
	text-align: center;
	margin-top: 1px;
}
.big span + span {
	margin-top: 0;
}
.big:disabled {
	color: #c4c4c4;
}
.on {
	background: #d9edf9;
	outline: 1px solid #a9d3ec;
	outline-offset: -1px;
}
.tall {
	width: 16px;
}
.stack {
	flex-direction: column;
	padding-right: 1px;
}
.stack button {
	height: 14px;
}
.col {
	display: flex;
	flex-direction: column;
	justify-content: space-around;
}
.small {
	gap: 2px;
	height: 9px;
}
.dots i {
	height: 6px;
}
.quad {
	display: grid;
	grid-template-columns: repeat(4, 15px);
}
.quad.two {
	grid-template-columns: repeat(2, 15px);
}
.options {
	height: 11px;
	padding: 3px 4px;
	background: #e8eee3;
}

/* docked area */
.work {
	display: grid;
	grid-template-columns: 107px 1fr 1fr 106px;
	flex: 1;
	background: #c9c9c9;
}
.caption {
	display: flex;
	justify-content: space-between;
	align-items: center;
	height: 8px;
	padding: 0 2px 0 1px;
	background: #cacaca;
	white-space: nowrap;
}
.browser {
	display: flex;
	flex-direction: column;
	background: #fff;
	border-right: 1px solid #bbb;
}
.tooling {
	display: flex;
	gap: 1px;
	height: 9px;
	padding: 0 1px;
	background: #cfcfcf;
}
.tooling .active {
	background: #eee;
}
.tooling button {
	width: 8px;
}
.search {
	display: flex;
	align-items: center;
	gap: 3px;
	height: 10px;
	margin: 3px 4px 3px 3px;
	padding-left: 4px;
	border: 1px solid #e2e2e2;
}
.search input {
	width: 60px;
	outline: 0;
}
.tree {
	display: grid;
	grid-auto-rows: 1fr;
	height: 256px;
	margin: 0;
	padding: 0;
	list-style: none;
}
.tree li {
	display: flex;
	align-items: center;
	padding-left: 1px;
}
.tree button {
	gap: 2px;
}
.tree .d1 {
	padding-left: 7px;
}
.tree .d2 {
	padding-left: 9px;
}
.tree .sel {
	background: #efefef;
}
.toggle {
	width: 8px;
	text-align: center;
}
.dash {
	align-self: stretch;
	width: 10px;
	margin-right: 1px;
	border-left: 1px dotted #ccc;
	background: linear-gradient(#ddd, #ddd) center / 100% 1px no-repeat;
}

/* view windows */
.doc {
	display: flex;
	flex-direction: column;
	min-width: 0;
	background: #fff;
	border-left: 1px solid #bdbdbd;
}
.doctabs {
	display: flex;
	height: 8px;
	background: #c9c9c9;
}
.doctabs button {
	justify-content: flex-start;
	gap: 4px;
	width: 49px;
	padding: 0 2px;
	background: #d0d0d0;
}
.doctabs .active {
	background: #fff;
}
.doctabs .lit {
	background: #dedede;
}
.doctabs b {
	margin-left: auto;
	font-weight: normal;
}
.doctabs i {
	margin-left: auto;
	padding-right: 2px;
}
.canvas {
	position: relative;
	display: flex;
	flex: 1;
	min-height: 0;
}
.drawing {
	flex: 1;
	min-width: 0;
	width: 100%;
}
.drawing .num text, .drawing .bubble text {
	font-family: "Liberation Sans", Arial, sans-serif;
	font-size: 4px;
	text-anchor: middle;
	fill: #111;
}
.drawing .bubble text {
	font-size: 8px;
}
.bubble circle {
	fill: #fff;
	stroke: #444;
	stroke-width: .7;
}
.solid path {
	fill: #7f7f7f;
	stroke: #3c3c3c;
	stroke-width: .7;
}
.solid path[fill="none"] {
	fill: none;
}
.solid .roof {
	fill: #7d7d7d;
	stroke: #303030;
	stroke-width: 2;
}
.solid .frame {
	fill: none;
	stroke: #3c3c3c;
	stroke-width: 1.4;
}
.solid .post {
	fill: none;
	stroke: #b8b8b8;
	stroke-width: 1.2;
}
.vscroll {
	display: flex;
	flex-direction: column;
	align-items: center;
	justify-content: space-between;
	flex: none;
	width: 6px;
	background: #ececec;
	font-size: 4px;
	color: #777;
}
.vscroll b {
	width: 3px;
	height: 7px;
	background: #cfcfcf;
}
.vscroll.long {
	width: 5px;
}
.vscroll.long b {
	flex: 1;
	margin-bottom: 12px;
	background: #c9c9c9;
}
.navbar {
	position: absolute;
	top: 2px;
	right: 7px;
	display: flex;
	flex-direction: column;
	align-items: center;
	justify-content: space-between;
	width: 13px;
	height: 45px;
	padding: 0 0 6px;
	background: #f2f2f2;
	border: 1px solid #c4c4c4;
	border-radius: 2px;
	color: #777;
}
.navbar hr {
	width: 9px;
	margin: 0;
	border: 0;
	border-top: 1px solid #ccc;
}
.navbar i {
	line-height: 4px;
}
.lower {
	position: absolute;
	top: 61px;
	right: 0;
	width: 13px;
}
.viewbar {
	display: flex;
	align-items: center;
	height: 8px;
	padding-left: 11px;
	background: #f1f1f1;
}
.viewbar .scale {
	flex: none;
	width: 24px;
}
.viewbar button {
	flex: 1 0 8px;
	max-width: 12px;
}
.hscroll {
	display: flex;
	align-items: center;
	justify-content: space-between;
	flex: 1 1 40px;
	max-width: 98px;
	padding-right: 8px;
	color: #888;
}
.hscroll b {
	width: 7px;
	height: 2px;
	background: #ccc;
}

/* right-click menu */
.menu {
	position: absolute;
	z-index: 3;
	top: 81px;
	left: 139px;
	display: flex;
	flex-direction: column;
	width: 101px;
	height: 226px;
	padding: 1px;
	background: #f1f1f1;
	border: 1px solid #bbb;
	box-shadow: 1px 1px 1px #777;
	color: #1a1a1a;
}
.menu button {
	flex: 3 1 0;
	min-height: 0;
	justify-content: flex-start;
	line-height: 5px;
}
.menu hr {
	flex: 1 1 0;
	width: 88px;
	margin: 0 0 0 auto;
	border: 0;
	background: linear-gradient(#d8d8d8, #d8d8d8) center / 100% 1px no-repeat;
}
.menu .open {
	background: #91c9f7;
}
.menu .off {
	color: #8f8f8f;
}
.menu em {
	margin-left: auto;
	padding-right: 3px;
	font-size: 6px;
}
.check {
	display: flex;
	align-items: center;
	justify-content: center;
	align-self: stretch;
	width: 8px;
	margin-right: 3px;
}
.checked {
	background: #91c9f7;
}
.menu.sub {
	top: 188px;
	left: 237px;
	width: 102px;
	height: 29px;
}
.marker {
	position: absolute;
	top: 174px;
	left: 232px;
	width: 80px;
	height: 34px;
	z-index: 4;
	mix-blend-mode: multiply;
	pointer-events: none;
}
.marker.under {
	z-index: 2;
	mix-blend-mode: normal;
}

/* properties */
.props {
	display: flex;
	flex-direction: column;
	background: #f4f4f4;
	border-left: 1px solid #aaa;
}
.type {
	height: 25px;
	gap: 4px;
	padding: 1px 3px 0;
	background: #fafafa;
	border-bottom: 1px solid #ddd;
}
.preview {
	width: 25px;
	height: 24px;
	background: linear-gradient(#b4b4b4, #b4b4b4) center / 100% 5px no-repeat #fff;
	border: 1px solid #ccc;
}
.name {
	text-align: left;
}
.type i {
	margin-left: auto;
}
.filter {
	display: flex;
	align-items: center;
	height: 14px;
	padding: 0 2px;
}
.filter select {
	appearance: none;
	flex: 1;
}
.filter i {
	margin-right: 3px;
}
.filter button {
	gap: 2px;
}
.gridwrap {
	display: flex;
	height: 265px;
}
table {
	flex: 1;
	height: 265px;
	table-layout: fixed;
	border-collapse: separate;
	border-spacing: 0;
	background: #fff;
}
td, th {
	padding: 0 0 0 4px;
	line-height: 6px;
	text-align: left;
	font-weight: normal;
	white-space: nowrap;
}
td:first-child {
	width: 48px;
	padding-left: 5px;
	border-right: 1px solid #ededed;
}
td + td {
	padding-left: 2px;
}
th {
	padding-left: 2px;
	background: #efefef;
}
th i {
	float: right;
	margin-right: 3px;
	transform: rotate(90deg);
}
.off td {
	color: #aaa;
}
td input {
	display: block;
}
td input[type="text"] {
	width: 46px;
	height: 6px;
	outline: 1px solid #888;
	outline-offset: 0;
	line-height: 6px;
}
td input[type="checkbox"] {
	appearance: none;
	width: 5px;
	height: 5px;
	border: 1px solid #ccc;
}
td input[type="checkbox"]:checked {
	background: #555;
	border-color: #555;
}
.apply {
	display: flex;
	align-items: center;
	gap: 1px;
	flex: 1;
	padding: 2px 2px 0 3px;
}
.apply button {
	width: 8px;
	height: 8px;
}
.apply .go {
	width: 27px;
	margin-left: auto;
	background: #e6e6e6;
	border: 1px solid #d2d2d2;
	color: #999;
}

/* bottom bars */
.status {
	display: grid;
	grid-template-columns: 1fr 265px 106px;
	height: 9px;
	background: #f1f1f1;
	border-bottom: 1px solid #ccc;
	color: #888;
}
.status div {
	display: flex;
	align-items: center;
	gap: 3px;
}
.status .left {
	justify-content: flex-end;
}
.status .mid {
	gap: 4px;
	padding-left: 79px;
}
.status .end {
	margin-left: auto;
	padding-right: 60px;
}
.status .right {
	padding-left: 7px;
}
.taskbar {
	display: flex;
	align-items: stretch;
	height: 16px;
	background: linear-gradient(90deg, #363739, #4a4a49 40%, #3f4042 60%, #38393b);
	color: #fff;
}
.taskbar > button {
	width: 18px;
	margin-right: 1px;
}
.taskbar .running {
	border-bottom: 1px solid #6db5ea;
}
.taskbar .current {
	width: 17px;
	background: #62676c;
	border-bottom: 1px solid #6db5ea;
}
.tray {
	display: flex;
	align-items: center;
	gap: 3px;
	margin-left: auto;
}
.tray b {
	font-weight: normal;
	font-size: 7px;
}
.taskbar time {
	width: 34px;
	padding-top: 2px;
	text-align: center;
}
.taskbar .notes {
	width: 16px;
	margin-right: 2px;
}
</style>
